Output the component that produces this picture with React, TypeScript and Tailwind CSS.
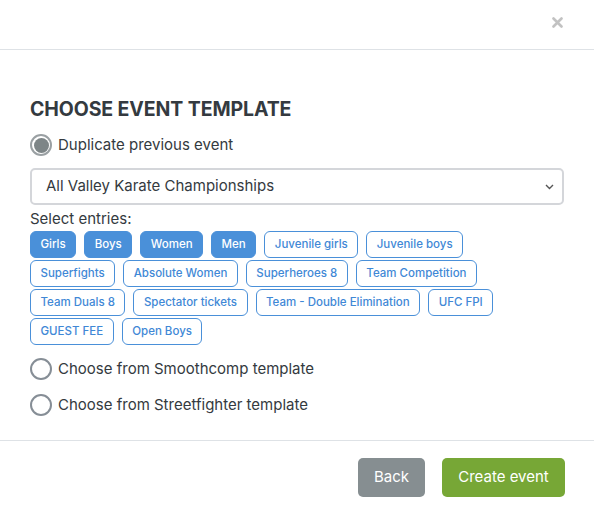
import { useState } from 'react';

const entries = [
  'Girls', 'Boys', 'Women', 'Men', 'Juvenile girls', 'Juvenile boys',
  'Superfights', 'Absolute Women', 'Superheroes 8', 'Team Competition',
  'Team Duals 8', 'Spectator tickets', 'Team - Double Elimination', 'UFC FPI',
  'GUEST FEE', 'Open Boys',
];

function Radio({ checked, label }: { checked?: boolean; label: string }) {
  return (
    <label className="flex items-center gap-[6px] text-[15px] leading-[22px] text-[#343a40]">
      <span
        className={
          checked
            ? 'flex h-[22px] w-[22px] shrink-0 items-center justify-center rounded-full border-2 border-[#9aa0a3] bg-white'
            : 'flex h-[22px] w-[22px] shrink-0 items-center justify-center rounded-full border-2 border-[#868e96] bg-white'
        }
      >
        {checked && <span className="h-[15px] w-[15px] rounded-full bg-[#7d8587]" />}
      </span>
      {label}
    </label>
  );
}

export default function App() {
  const [selected] = useState<string[]>(['Girls', 'Boys', 'Women', 'Men']);

  return (
    <div className="h-[510px] w-[594px] bg-white font-['Inter',sans-serif] text-[#343a40]">
      <div className="flex h-[50px] items-center justify-end border-b border-[#dee2e6] pr-[31px]">
        <svg width="11" height="11" viewBox="0 0 11 11" className="mt-[-5px]">
          <path d="M1.5 1.5l8 8M9.5 1.5l-8 8" stroke="#c2c2c2" strokeWidth="2.6" strokeLinecap="round" />
        </svg>
      </div>

      <div className="px-[30px] pt-[48px] pb-[24px]">
        <h2 className="text-[19.5px] font-bold leading-[22px] tracking-[-0.1px] text-[#343a40]">CHOOSE EVENT TEMPLATE</h2>

        <div className="mt-[14px]">
          <Radio checked label="Duplicate previous event" />
        </div>

        <div className="mt-[12px] flex h-[37px] items-center justify-between rounded-[5px] border-2 border-[#d4d6da] pl-[14px] pr-[8px] text-[15px]">
          <span>All Valley Karate Championships</span>
          <svg width="9" height="6" viewBox="0 0 9 6">
            <path d="M1 1l3.5 3.5L8 1" fill="none" stroke="#555" strokeWidth="1.4" />
          </svg>
        </div>

        <p className="mt-[5px] text-[15px] leading-[18px]">Select entries:</p>

        <div className="mt-[3px] flex flex-wrap gap-x-[8px] gap-y-[2px] pr-[12px]">
          {entries.map((e) => {
            const on = selected.includes(e);
            return (
              <span
                key={e}
                className={
                  on
                    ? 'flex h-[27px] items-center rounded-[6px] border border-[#4a90d9] bg-[#4a90d9] px-[9.5px] text-[11.5px] font-medium text-white'
                    : 'flex h-[27px] items-center rounded-[6px] border border-[#4a90d9] bg-white px-[9.5px] text-[11.5px] font-medium text-[#3f88d6]'
                }
              >
                {e}
              </span>
            );
          })}
        </div>

        <div className="mt-[13px] flex flex-col gap-[14px]">
          <Radio label="Choose from Smoothcomp template" />
          <Radio label="Choose from Streetfighter template" />
        </div>
      </div>

      <div className="flex justify-end gap-[17px] border-t border-[#dee2e6] px-[29px] pt-[17px]">
        <button className="h-[39px] w-[67px] rounded-[5px] bg-[#868e91] text-[15px] text-white">Back</button>
        <button className="h-[39px] w-[123px] rounded-[5px] bg-[#77a736] text-[15px] text-white">Create event</button>
      </div>
    </div>
  );
}
